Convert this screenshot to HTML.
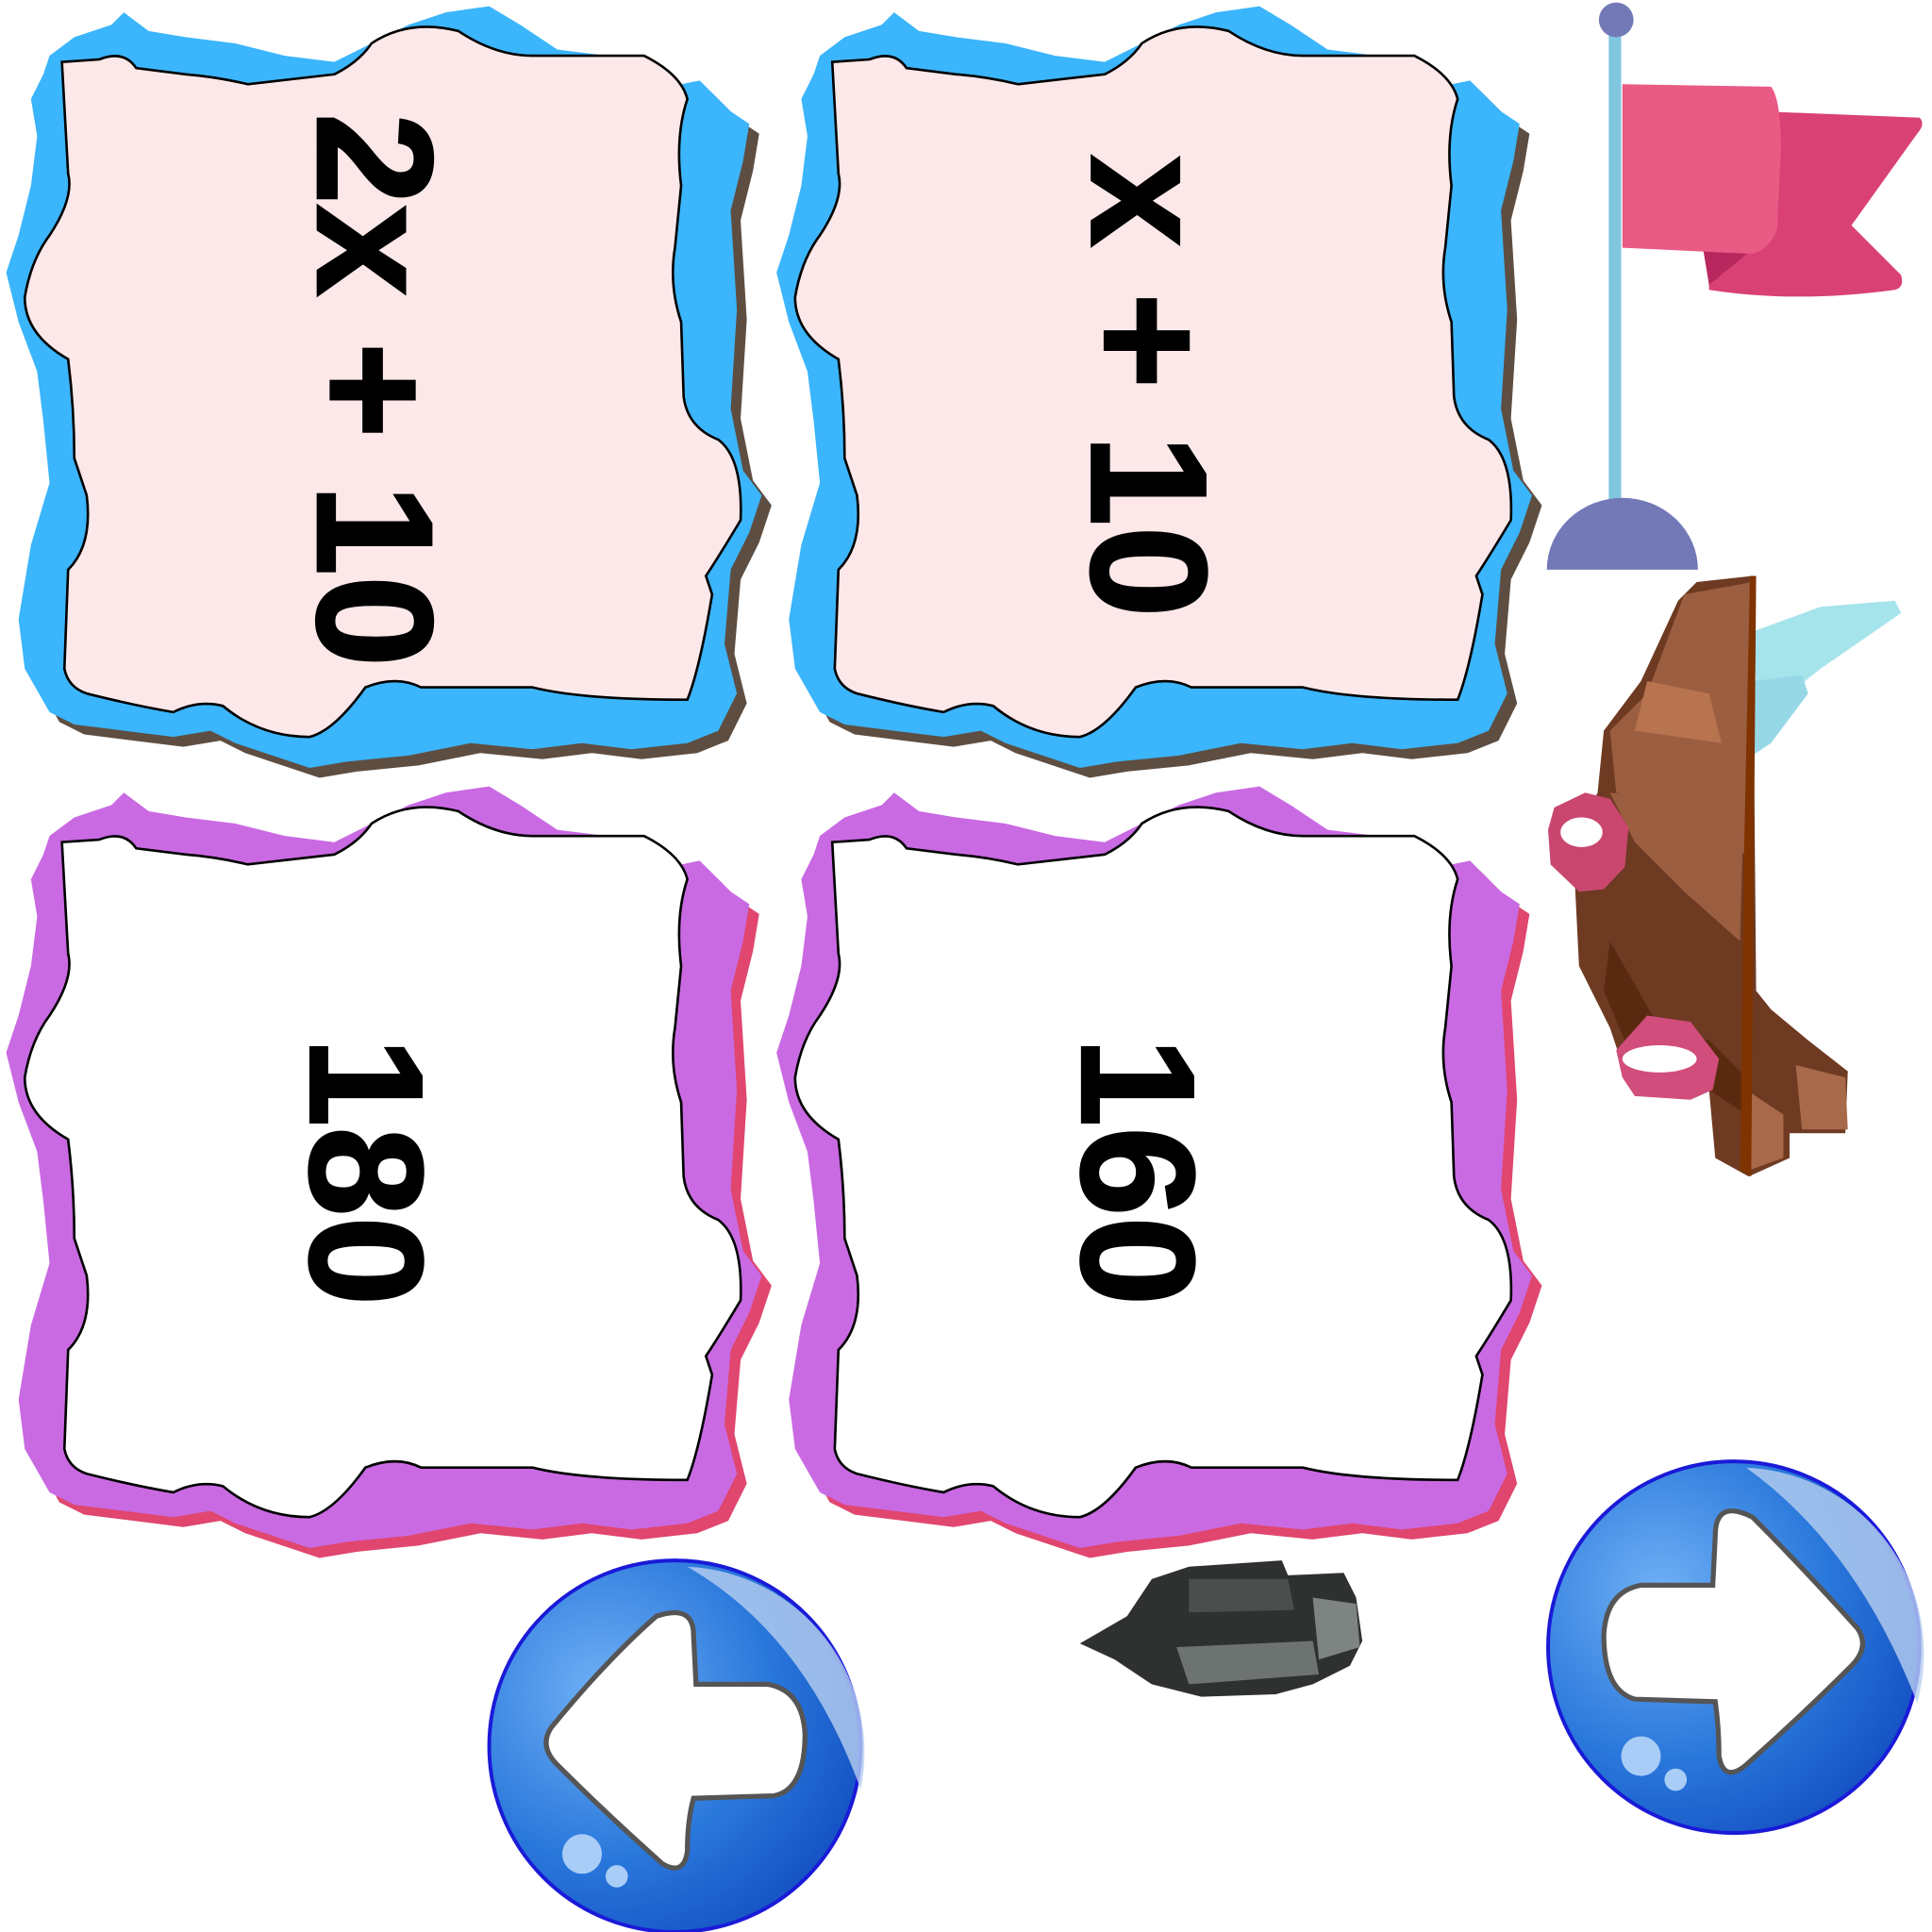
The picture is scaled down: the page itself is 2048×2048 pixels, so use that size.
<!DOCTYPE html>
<html><head><meta charset="utf-8"><style>
html,body{margin:0;padding:0;background:#fff;width:2048px;height:2048px;overflow:hidden}
svg{display:block}
text{font-family:"Liberation Sans",sans-serif;font-weight:bold;fill:#000;stroke:#000;stroke-width:2}
</style></head><body>
<svg width="2048" height="2048" viewBox="0 0 1560 1560" preserveAspectRatio="none" xmlns="http://www.w3.org/2000/svg">
<defs>
<path id="outer" d="M40,45 L60,30 L90,20 L100,10 L120,25 L150,30 L190,35 L230,45 L270,50 L300,35 L330,20 L360,10 L395,5 L420,20 L450,40 L490,45 L520,45 L540,70 L565,65 L590,90 L605,100 L600,130 L590,170 L595,250 L590,330 L600,380 L615,400 L605,430 L590,460 L585,520 L595,560 L580,590 L555,600 L510,605 L470,600 L430,605 L380,600 L330,610 L280,615 L250,620 L220,610 L190,600 L170,590 L140,595 L100,590 L60,585 L40,575 L20,540 L15,500 L25,440 L40,390 L35,340 L30,300 L15,260 L5,220 L15,190 L25,150 L30,110 L25,80 L35,60 Z"/>
<path id="inner" d="M50,50 L80,48 Q100,40 110,55 L150,60 Q175,62 200,68 L270,60 Q290,50 300,35 Q330,15 370,25 Q400,45 430,45 L520,45 Q550,60 555,80 Q545,110 550,150 L545,200 Q540,230 550,260 L552,320 Q555,345 580,355 Q600,370 598,420 Q580,450 570,465 L575,480 Q565,540 555,565 Q470,565 430,555 Q400,555 340,555 Q320,545 295,555 Q270,590 250,595 Q210,595 180,570 Q160,565 140,575 Q110,570 70,560 Q55,555 52,540 L55,460 Q75,440 70,400 L60,370 Q60,330 55,290 Q20,270 20,240 Q25,210 40,190 Q60,160 55,140 L50,50 Z"/>
<radialGradient id="btn" cx="30%" cy="35%" r="75%">
<stop offset="0" stop-color="#6fb0f5"/><stop offset="0.6" stop-color="#2a78dc"/><stop offset="1" stop-color="#1553c4"/>
</radialGradient>
</defs>

<g transform="translate(0,0)">
<use href="#outer" fill="#5e4e42" transform="translate(8,8)"/>
<use href="#outer" fill="#3bb5fb"/>
<use href="#inner" fill="#fce8e8" stroke="#000" stroke-width="2"/>
<text transform="translate(302,315) rotate(90)" font-size="133" text-anchor="middle" dominant-baseline="central">2x + 10</text>
</g>
<g transform="translate(622,0)">
<use href="#outer" fill="#5e4e42" transform="translate(8,8)"/>
<use href="#outer" fill="#3bb5fb"/>
<use href="#inner" fill="#fce8e8" stroke="#000" stroke-width="2"/>
<text transform="translate(305,312) rotate(90)" font-size="133" text-anchor="middle" dominant-baseline="central">x + 10</text>
</g>
<g transform="translate(0,630)">
<use href="#outer" fill="#e0466e" transform="translate(8,8)"/>
<use href="#outer" fill="#c96ae3"/>
<use href="#inner" fill="#fff" stroke="#000" stroke-width="2"/>
<text transform="translate(295,316) rotate(90)" font-size="130" text-anchor="middle" dominant-baseline="central">180</text>
</g>
<g transform="translate(622,630)">
<use href="#outer" fill="#e0466e" transform="translate(8,8)"/>
<use href="#outer" fill="#c96ae3"/>
<use href="#inner" fill="#fff" stroke="#000" stroke-width="2"/>
<text transform="translate(296,316) rotate(90)" font-size="130" text-anchor="middle" dominant-baseline="central">160</text>
</g>

<rect x="1299" y="20" width="10" height="390" fill="#80c6de"/>
<circle cx="1305" cy="16" r="14" fill="#7379b7"/>
<path d="M1249,460 A61,58 0 0 1 1371,460 Z" fill="#7379b7"/>
<path d="M1375,88 L1550,95 Q1555,100 1548,108 L1495,182 L1535,222 Q1538,232 1530,234 Q1450,245 1380,234 Z" fill="#d94175"/>
<path d="M1375,200 Q1400,200 1435,185 L1380,230 Z" fill="#b8285e"/>
<path d="M1310,68 L1430,70 Q1438,80 1438,120 L1435,185 Q1430,200 1415,205 L1310,200 Z" fill="#e95a84"/>

<path d="M1415,510 L1470,490 L1530,485 L1535,495 L1470,540 L1420,580 Z" fill="#a6e4ec"/>
<path d="M1415,550 L1455,545 L1460,560 L1430,600 L1415,610 Z" fill="#96d8e6"/>
<path d="M1415,465 L1370,470 L1355,485 L1325,550 L1295,590 L1290,640 L1270,680 L1275,780 L1300,830 L1310,860 L1380,880 L1385,935 L1412,950 L1445,935 L1445,915 L1490,915 L1492,865 L1460,840 L1430,815 L1418,800 Z" fill="#6e3a22"/>
<path d="M1360,480 L1415,470 L1410,690 L1380,680 L1340,650 L1305,640 L1300,590 L1330,560 Z" fill="#9c5e40"/>
<path d="M1300,640 L1408,650 L1405,760 L1360,720 L1320,680 Z" fill="#9c5e40"/>
<path d="M1330,550 L1380,560 L1390,600 L1320,590 Z" fill="#b8734f"/>
<path d="M1450,860 L1490,870 L1492,912 L1455,912 Z" fill="#a8694a"/>
<path d="M1410,880 L1440,900 L1440,935 L1412,945 Z" fill="#a8694a"/>
<path d="M1300,760 L1340,830 L1380,840 L1410,870 L1410,900 L1380,880 L1320,860 L1295,800 Z" fill="#5a2a10"/>
<path d="M1413,465 L1418,465 L1414,950 L1405,945 L1408,700 Z" fill="#7e3300"/>
<path d="M1255,652 L1280,640 L1300,645 L1315,668 L1312,700 L1295,718 L1275,720 L1252,698 L1250,670 Z" fill="#c9476f"/>
<ellipse cx="1277" cy="672" rx="17" ry="12" fill="#fff"/>
<path d="M1305,848 L1330,820 L1365,825 L1388,855 L1383,880 L1365,888 L1320,885 L1310,870 Z" fill="#d04d7c"/>
<ellipse cx="1340" cy="855" rx="30" ry="11" fill="#fff"/>

<path d="M872,1327 L910,1305 L930,1275 L960,1265 L1035,1260 L1040,1272 L1085,1270 L1095,1290 L1100,1325 L1090,1345 L1060,1360 L1030,1368 L970,1370 L930,1360 L900,1340 Z" fill="#2e3130"/>
<path d="M960,1275 L1040,1275 L1045,1300 L960,1302 Z" fill="#4a4e4c"/>
<path d="M950,1330 L1060,1325 L1065,1352 L960,1360 Z" fill="#6d7370"/>
<path d="M1060,1290 L1095,1295 L1098,1330 L1065,1340 Z" fill="#7d8481"/>

<circle cx="545" cy="1410" r="150" fill="url(#btn)" stroke="#1a1ad8" stroke-width="3"/>
<path d="M555,1265 A150,150 0 0 1 695,1445 Q650,1320 555,1265 Z" fill="#b8cff0" opacity="0.8"/>
<circle cx="470" cy="1497" r="16" fill="#a9cdf7"/>
<circle cx="498" cy="1515" r="9" fill="#a9cdf7"/>
<path d="M445,1395 Q490,1340 530,1305 Q560,1295 560,1320 L562,1360 L620,1360 Q648,1365 650,1400 Q650,1445 625,1450 L560,1452 Q555,1470 555,1495 Q552,1515 535,1505 Q490,1465 450,1425 Q435,1410 445,1395 Z" fill="#fff" stroke="#555" stroke-width="4"/>

<circle cx="1400" cy="1330" r="150" fill="url(#btn)" stroke="#1a1ad8" stroke-width="3"/>
<path d="M1410,1185 A150,150 0 0 1 1548,1375 Q1500,1250 1410,1185 Z" fill="#b8cff0" opacity="0.8"/>
<circle cx="1325" cy="1418" r="16" fill="#a9cdf7"/>
<circle cx="1353" cy="1437" r="9" fill="#a9cdf7"/>
<path d="M1500,1315 Q1455,1265 1415,1225 Q1385,1210 1385,1240 L1383,1280 L1325,1280 Q1297,1285 1295,1320 Q1295,1365 1320,1372 L1385,1374 Q1388,1395 1388,1418 Q1392,1440 1410,1425 Q1455,1385 1495,1345 Q1510,1330 1500,1315 Z" fill="#fff" stroke="#555" stroke-width="4"/>
</svg>
</body></html>
